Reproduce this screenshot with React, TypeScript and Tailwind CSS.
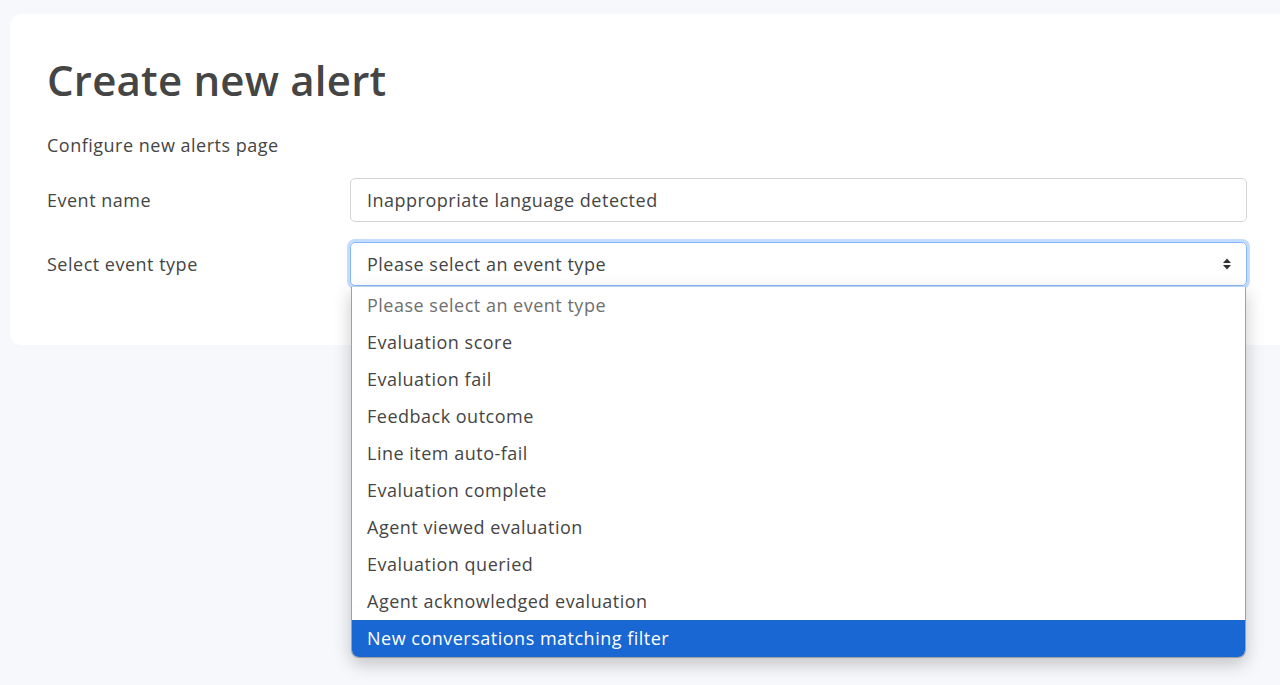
import React from "react";

const eventTypes = [
  "Please select an event type",
  "Evaluation score",
  "Evaluation fail",
  "Feedback outcome",
  "Line item auto-fail",
  "Evaluation complete",
  "Agent viewed evaluation",
  "Evaluation queried",
  "Agent acknowledged evaluation",
  "New conversations matching filter",
];

const font = { fontFamily: '"Open Sans", "Liberation Sans", sans-serif' };

export default function App() {
  const selected = eventTypes.length - 1;

  return (
    <div className="min-h-screen bg-[#f7f8fc] pt-[14px] pl-[10px]" style={font}>
      <div className="bg-white rounded-l-[12px] h-[331px] pl-[37px] pr-[33px] pt-[40px] text-[#454545]">
        <h1 className="text-[42px] leading-[52px] font-semibold tracking-[0.2px]">
          Create new alert
        </h1>

        <p className="mt-[27px] text-[18px] leading-[24px] tracking-[0.5px]">Configure new alerts page</p>

        <div className="mt-[21px] flex flex-col gap-[20px] text-[18px] tracking-[0.5px]">
          {/* event name */}
          <div className="flex items-center">
            <label className="w-[303px]">Event name</label>
            <div className="flex-1 h-[44px] flex items-center px-[16px] border border-[#d5d5d5] rounded-[5px]">
              Inappropriate language detected
            </div>
          </div>

          {/* event type */}
          <div className="flex items-center">
            <label className="w-[303px]">Select event type</label>
            <div className="relative flex-1">
              <div className="h-[44px] flex items-center justify-between px-[16px] border border-[#86b7fe] rounded-[5px] ring-[3px] ring-[#c4dcfd]">
                <span>Please select an event type</span>
                <svg width="10" height="14" viewBox="0 0 10 14" className="mr-[-2px]">
                  <path d="M1 6 L5 1.5 L9 6 Z" fill="#333" />
                  <path d="M1 8 L5 12.5 L9 8 Z" fill="#333" />
                </svg>
              </div>

              {/* dropdown */}
              <ul className="absolute left-[1px] right-[1px] top-[45px] z-10 bg-white border border-[#a0a0a0] border-t-0 rounded-b-[8px] overflow-hidden shadow-[0_6px_18px_rgba(0,0,0,0.22)]">
                {eventTypes.map((item, idx) => (
                  <li
                    key={idx}
                    className={
                      idx === selected
                        ? "h-[37px] flex items-center px-[15px] bg-[#1967d2] text-white"
                        : idx === 0
                        ? "h-[37px] flex items-center px-[15px] text-[#6f6f6f]"
                        : "h-[37px] flex items-center px-[15px] text-[#454545]"
                    }
                  >
                    {item}
                  </li>
                ))}
              </ul>
            </div>
          </div>
        </div>
      </div>
    </div>
  );
}
